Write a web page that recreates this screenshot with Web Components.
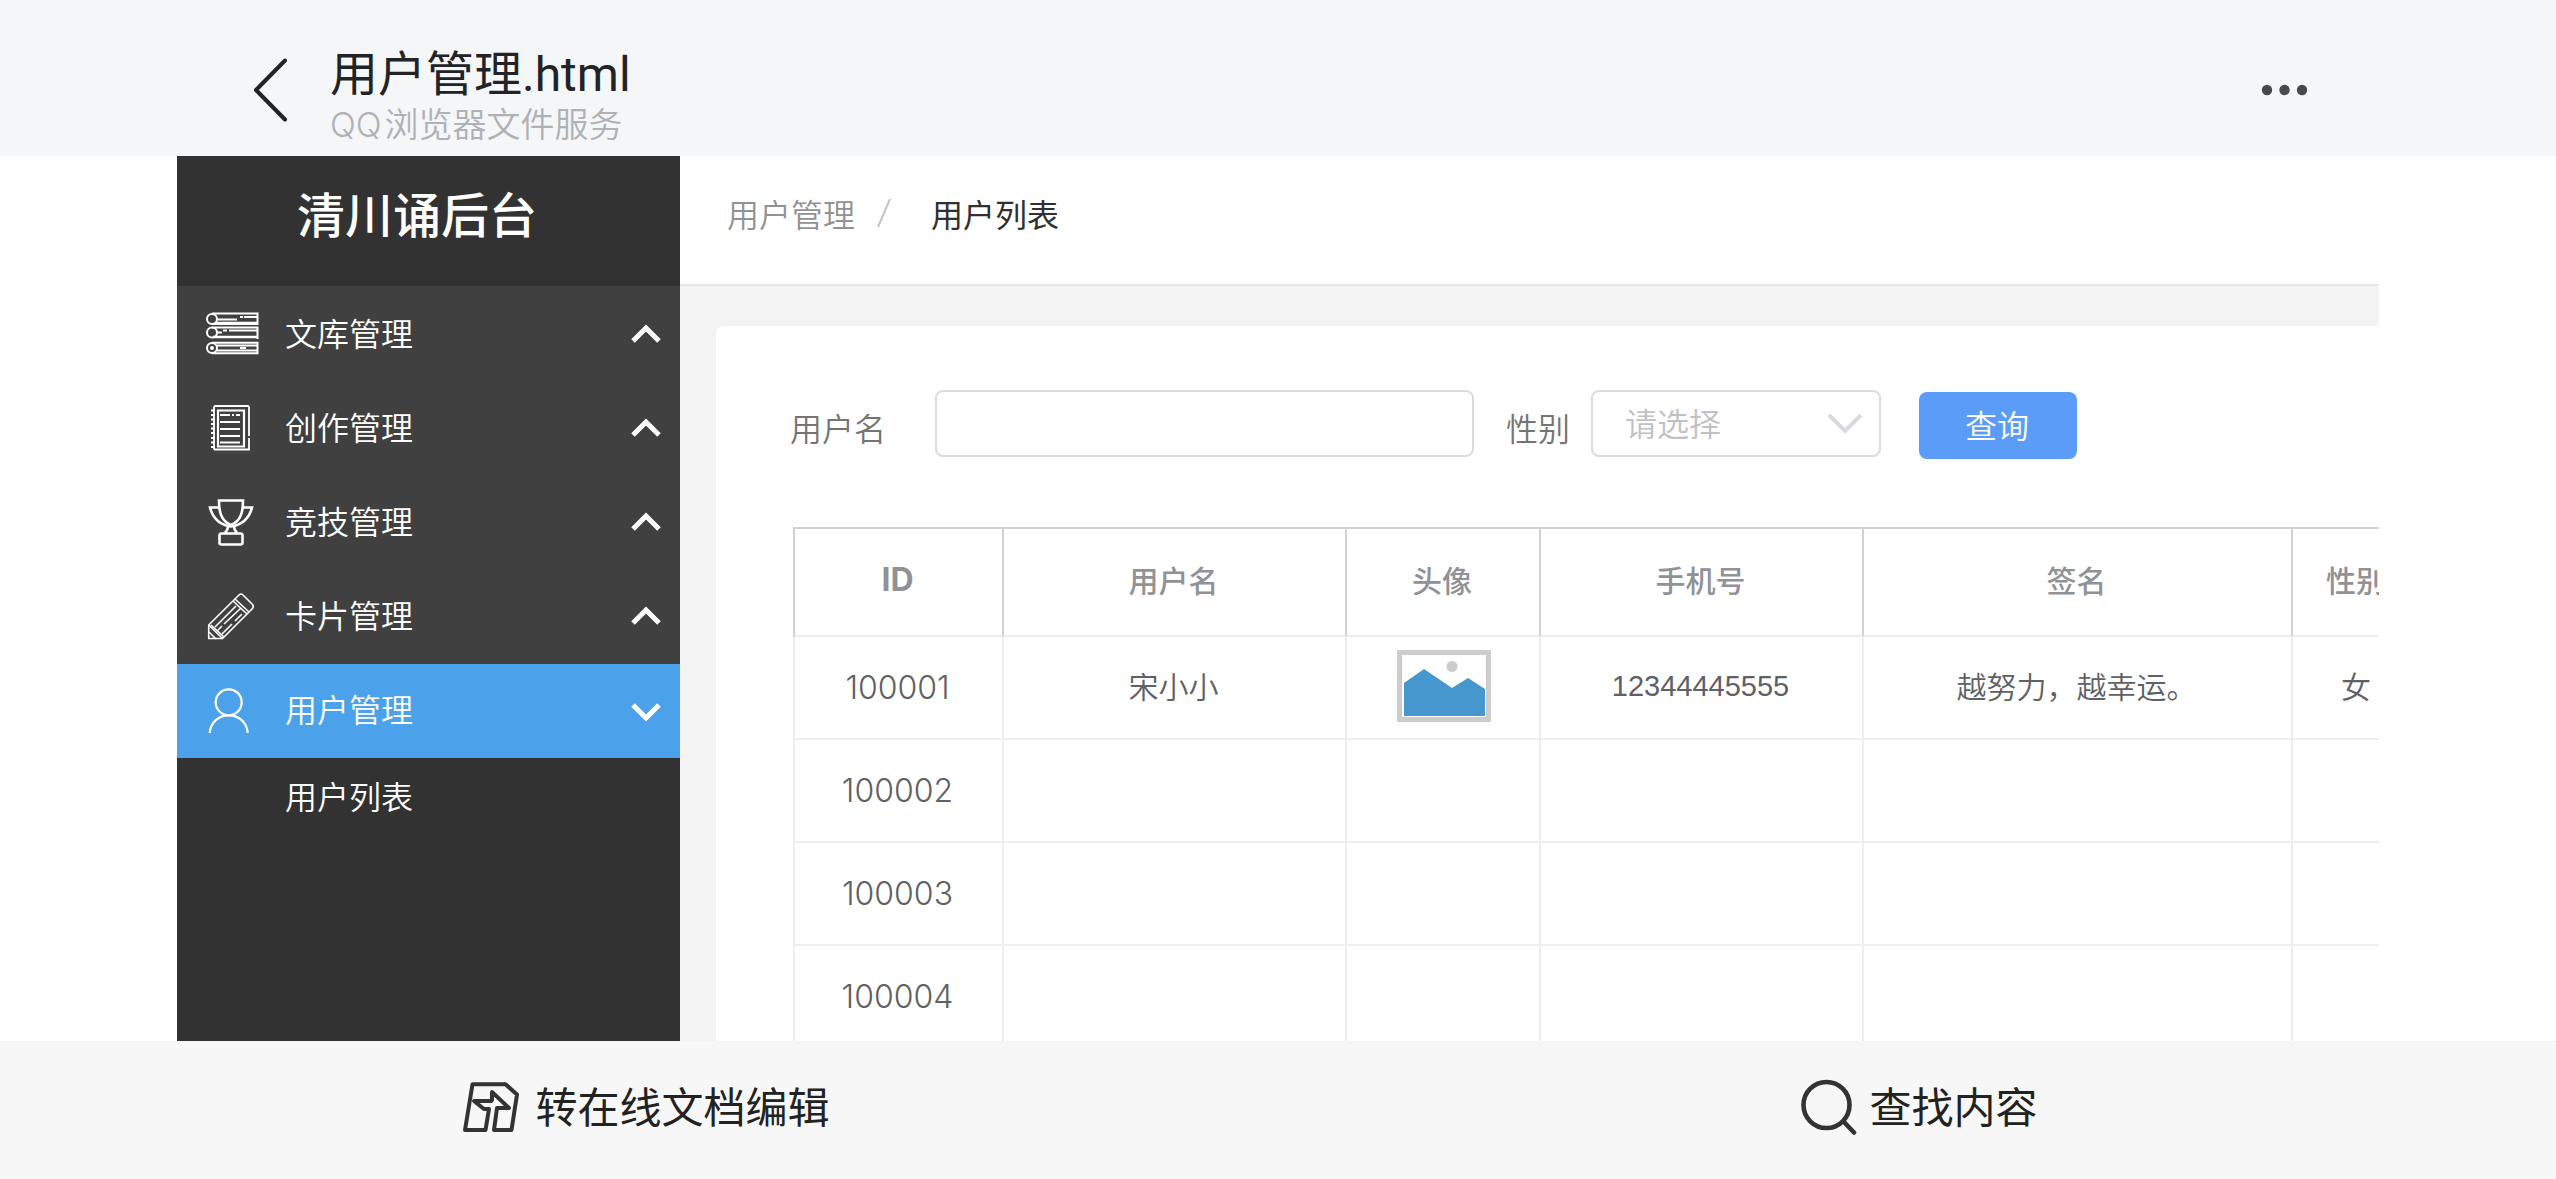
<!DOCTYPE html>
<html lang="zh-CN">
<head>
<meta charset="utf-8">
<title>用户管理.html</title>
<style>
  html, body { margin: 0; height: 100%; }
  body { font-family: "Noto Sans CJK SC", "Noto Sans", sans-serif; font-size: 32px; background: #fff; overflow: hidden; }
</style>
</head>
<body>
<file-viewer></file-viewer>
<script>
const define = (name, html, setup) => {
  const template = document.createElement('template');
  template.innerHTML = html;
  customElements.define(name, class extends HTMLElement {
    constructor() {
      super();
      this.attachShadow({ mode: 'open' }).append(template.content.cloneNode(true));
    }
    connectedCallback() { if (setup) setup(this, this.shadowRoot); }
  });
};

const ICONS = {
  books: `<g stroke-width="2"><path d="M8 2.5H53.5V13H8"/><circle cx="8" cy="8" r="5"/><path d="M13 8.5H33M36 6h3M40 6h13"/><path d="M12 12H53" stroke-width="2.4"/>
    <path d="M8 16.5H53.5V28"/><circle cx="8" cy="21.5" r="5"/><path d="M13 21.5h5M19 19.5h4M25 19.5H53"/><path d="M9 26H54" stroke-width="2.4"/>
    <path d="M8 31.8H53.5V42.2H8"/><circle cx="8" cy="37" r="5"/><circle cx="8" cy="37" r="1"/><path d="M13 34.5H53M13 39.5H53M36 37h6"/></g>`,
  notebook: `<g stroke-width="1.8"><path d="M10 44.500V2.500Q10 1 11.500 1H43.500Q45 1 45 2.500V31M45 33V44.500H10"/><path d="M14 5.500H40V41.500H14Z" stroke-width="2.200"/>
    <path d="M16 10h10M28 10h2M32 10h4M16 17h20M16 24h20M16 31h20M16 37.500h20"/>
    <path d="M7 5.500h4M7 10h4M7 14.500h4M7 19h4M7 23.500h4M7 28h4M7 33h4M7 37.500h4M7 42h4"/></g>`,
  trophy: `<g stroke-width="2.6"><path d="M15 1.500H39C39 13 37 22 27 26C17 22 15 13 15 1.500Z"/>
    <path d="M15 8.500H6C9 20 17 26 27 27.500C37 26 45 20 48 8.500H39"/><path d="M24 27.500C24 30 23 32 21 34M30 27.500C30 30 31 32 33 34"/><rect x="15.500" y="34.500" width="23" height="11" rx="2"/></g>`,
  pencil: `<g stroke-width="1.600"><path d="M4.700 45.500V32L35 2Q37 0 39 2L48.500 11.500Q50 13.500 48.500 15.500L18.500 45.500Z"/>
    <path d="M4.700 32L18.500 45.500M7 32L20 44M5 39l7 7M29 8L43 21M31 6L45 19M11 34L32 13M14 37L18 33M20 31L37 15M18 41L28 31M31 28l7-7"/></g>`,
  user: `<g stroke-width="2.200"><circle cx="24.700" cy="15.300" r="13"/><path d="M5.700 46C6.500 36 14 28.300 24.700 28.300S43 36 43.700 46"/></g>`
};

/* ---- top bar ---- */
define('viewer-header', `
  <style>
    :host { display: flex; align-items: center; height: 156px; box-sizing: border-box; padding: 24px 240px 0 246px; background: #f5f6f8; flex: none; }
    button { border: 0; padding: 0; background: none; display: flex; }
    .names { flex: 1; padding-top: 14px; margin-left: 36px; display: flex; flex-direction: column; }
    h1 { margin: 0; font-family: Roboto, "Noto Sans CJK SC", sans-serif; font-weight: 400; font-size: 48px; line-height: 56px; color: #222326; }
    p { margin: 0; font-family: Inter, "Noto Sans CJK SC", sans-serif; font-size: 34px; font-weight: 350; line-height: 44px; color: #b0b1b4; }
  </style>
  <button aria-label="返回"><svg width="48" height="64" viewBox="0 0 48 64" fill="none" stroke="#222326" stroke-width="4" stroke-linecap="round"><path d="M39 2.500L10 32L39 61.500" stroke-linejoin="round"/></svg></button>
  <div class="names"><h1><slot name="title"></slot></h1><p><slot name="source"></slot></p></div>
  <button aria-label="更多"><svg width="62" height="20" viewBox="0 0 62 20" fill="#48494b"><circle cx="13" cy="10" r="5.200"/><circle cx="30.500" cy="10" r="5.200"/><circle cx="48" cy="10" r="5.200"/></svg></button>
`);

/* ---- sidebar ---- */
define('nav-item', `
  <style>
    :host { display: block; background: #404040; }
    :host([open]) { background: #4ca2ea; }
    a { display: flex; align-items: center; height: 94px; padding: 0 16px 0 27px; color: #fff; text-decoration: none; font-weight: 350; line-height: 48px; }
    .icon { width: 56px; height: 48px; fill: none; stroke: #fff; }
    span { flex: 1; margin-left: 25px; padding-bottom: 6px; }
    .arrow { fill: none; stroke: #fff; stroke-width: 5; }
    :host([open]) .arrow { transform: scaleY(-1); }
  </style>
  <a href="#"><svg class="icon" viewBox="0 0 56 48"></svg><span><slot></slot></span><svg class="arrow" width="36" height="24" viewBox="0 0 36 24"><path d="M5 18L18 5L31 18"/></svg></a>
`, (el, root) => { root.querySelector('.icon').innerHTML = ICONS[el.getAttribute('icon')]; });

define('side-nav', `
  <style>
    :host { display: block; width: 503px; flex: none; background: #323232; color: #fff; }
    h2 { margin: 0; height: 130px; box-sizing: border-box; padding: 21px 0 0 120px; font-size: 48px; font-weight: 500; line-height: 70px; }
    nav { border-top: 2px solid #404040; }
    .sub { display: flex; align-items: center; height: 74px; padding-left: 108px; color: #fff; text-decoration: none; font-weight: 350; }
  </style>
  <h2>清川诵后台</h2>
  <nav>
    <nav-item icon="books">文库管理</nav-item>
    <nav-item icon="notebook">创作管理</nav-item>
    <nav-item icon="trophy">竞技管理</nav-item>
    <nav-item icon="pencil">卡片管理</nav-item>
    <nav-item icon="user" open>用户管理</nav-item>
    <a class="sub" href="#">用户列表</a>
  </nav>
`);

/* ---- breadcrumb ---- */
define('bread-crumb', `
  <style>
    :host { display: flex; align-items: center; height: 130px; box-sizing: border-box; padding: 0 47px 14px; border-bottom: 2px solid #e8e8e8; background: #fff; font-weight: 350; line-height: 48px; }
    a { color: #929292; text-decoration: none; }
    svg { margin: 0 40px 0 22px; }
    b { font-weight: 400; color: #303030; }
  </style>
  <a href="#">用户管理</a>
  <svg width="14" height="32" viewBox="0 0 14 32" stroke="#c4c4c4" stroke-width="2"><path d="M1 30L13 2"/></svg>
  <b>用户列表</b>
`);

/* ---- search form ---- */
define('user-search', `
  <style>
    :host { display: block; }
    form { display: flex; align-items: center; height: 70px; font-weight: 350; }
    label { color: #747474; padding-top: 8px; }
    input, select, button { font: inherit; box-sizing: border-box; border-radius: 8px; }
    input, select { height: 67px; border: 2px solid #dcdcdc; background: #fff; }
    input { width: 539px; margin: 0 32px 0 49px; padding: 0 24px; }
    .select { position: relative; margin: 0 38px 0 21px; display: flex; }
    select { appearance: none; width: 290px; padding: 0 32px 2px; color: #bfc1c5; }
    .select svg { position: absolute; right: 18px; top: 22px; pointer-events: none; }
    button { width: 158px; height: 67px; border: 0; margin-top: 4px; padding: 0 2px 2px 0; background: #5a9cf8; color: #fff; }
  </style>
  <form>
    <label for="name">用户名</label><input id="name" type="text">
    <label for="sex">性别</label>
    <div class="select"><select id="sex"><option>请选择</option></select><svg width="36" height="24" viewBox="0 0 36 24" fill="none" stroke="#d8dadd" stroke-width="4"><path d="M2 3L18 19L34 3"/></svg></div>
    <button type="button">查询</button>
  </form>
`);

/* ---- user table ---- */
define('picture-thumb', `
  <style>:host { display: block; width: 94px; height: 72px; margin: 0 auto; } svg { display: block; }</style>
  <svg width="94" height="72" viewBox="0 0 94 72" role="img" aria-label="头像"><path d="M2.500 2.500H91.500V69.500H2.500Z" fill="#fff" stroke="#ccc" stroke-width="5"/><circle cx="55" cy="16.500" r="5.500" fill="#ccc"/><path d="M7 33L27 19L55 38L71 28L88 39V66H7Z" fill="#4797cf"/></svg>
`);

define('user-table', `
  <style>
    :host { display: block; }
    table { table-layout: fixed; width: 1630px; border-collapse: separate; border-spacing: 0; border-left: 2px solid #eee; }
    th, td { box-sizing: border-box; padding: 0 2px 6px 0; border-right: 2px solid #eee; border-bottom: 2px solid #eee; text-align: center; font-size: 30px; line-height: 44px; }
    th { height: 110px; border-top: 2px solid #d2d2d2; border-right-color: #d2d2d2; color: #909296; font-weight: 500; }
    th:first-child { box-shadow: -2px 0 #d2d2d2; font-family: Inter, sans-serif; font-size: 32px; font-weight: 700; padding-bottom: 4px; }
    td { height: 103px; color: #606164; font-weight: 350; }
    td:first-child { font-family: Inter, sans-serif; font-size: 32px; font-weight: 300; padding-bottom: 0; }
    td.phone { font-family: "Liberation Sans", Arial, sans-serif; font-size: 29px; font-weight: 400; padding-bottom: 4px; }
    td.pic { padding: 0 0 4px 2px; }
  </style>
  <table>
    <colgroup><col style="width:209px"><col style="width:343px"><col style="width:194px"><col style="width:323px"><col style="width:429px"><col></colgroup>
    <thead><tr><th>ID</th><th>用户名</th><th>头像</th><th>手机号</th><th>签名</th><th>性别</th></tr></thead>
    <tbody>
      <tr><td>100001</td><td>宋小小</td><td class="pic"><picture-thumb></picture-thumb></td><td class="phone">12344445555</td><td>越努力，越幸运。</td><td>女</td></tr>
      <tr><td>100002</td><td></td><td></td><td></td><td></td><td></td></tr>
      <tr><td>100003</td><td></td><td></td><td></td><td></td><td></td></tr>
      <tr><td>100004</td><td></td><td></td><td></td><td></td><td></td></tr>
    </tbody>
  </table>
`);

define('admin-page', `
  <style>
    :host { display: flex; flex: 1; min-height: 0; margin: 0 177px; overflow: hidden; }
    main { flex: 1; min-width: 0; overflow: hidden; background: #f3f3f3; }
    section { margin: 40px 0 0 36px; padding: 62px 0 0 77px; background: #fff; border-radius: 8px 0 0 0; }
    user-search { margin: 0 0 69px -3px; }
  </style>
  <side-nav></side-nav>
  <main>
    <bread-crumb></bread-crumb>
    <section><user-search></user-search><user-table></user-table></section>
  </main>
`);

/* ---- bottom bar ---- */
define('viewer-footer', `
  <style>
    :host { display: flex; height: 138px; flex: none; box-sizing: border-box; padding: 0 0 6px 10px; background: #f7f7f7; }
    button { flex: 1; display: flex; align-items: center; justify-content: center; gap: 16px; border: 0; padding: 0; background: none; font: inherit; font-size: 42px; color: #222; }
    svg { fill: none; stroke: #333; }
    .find { gap: 12px; }
    span { padding-bottom: 5px; }
  </style>
  <button><svg width="56" height="56" viewBox="0 0 56 56" stroke-width="4" stroke-linejoin="round"><path d="M9.500 5.300H42.500L54 15.500L48.500 51H31L34 29H46L29 13V21L28 22H11L21 30H26L22.500 51H2Z"/></svg><span>转在线文档编辑</span></button>
  <button class="find"><svg width="56" height="58" viewBox="0 0 56 58" stroke-width="4.600" stroke-linecap="round"><circle cx="25.500" cy="27" r="23"/><path d="M43 44L53 54.500"/></svg><span>查找内容</span></button>
`);

define('file-viewer', `
  <style>
    :host { display: flex; flex-direction: column; height: 100vh; }
    .brand { display: inline-block; margin-right: 3px; }
  </style>
  <viewer-header><span slot="title">用户管理.html</span><span slot="source"><span class="brand">QQ</span>浏览器文件服务</span></viewer-header>
  <admin-page></admin-page>
  <viewer-footer></viewer-footer>
`);
</script>
</body>
</html>
